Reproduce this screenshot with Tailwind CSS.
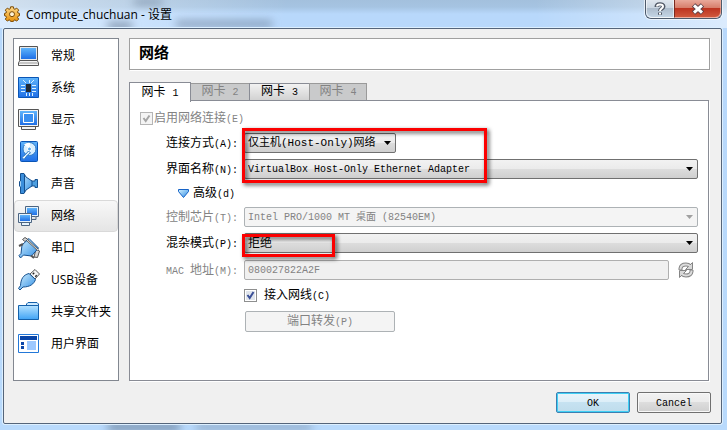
<!DOCTYPE html>
<html lang="zh-CN">
<head>
    <meta charset="UTF-8">
    <meta name="viewport" content="width=device-width, initial-scale=1.0">
    <title>Compute_chuchuan - 设置</title>
    <script src="https://cdn.jsdelivr.net/npm/@tailwindcss/browser@4"></script>
</head>
<body class="font-['Open_Sans','Noto_Sans_CJK_SC',sans-serif] text-xs text-black">
    <!-- Shared gradients for the icons -->
    <svg class="absolute size-0" aria-hidden="true">
        <defs>
            <linearGradient id="screen" x1="0" y1="0" x2="0" y2="1">
                <stop offset="0" stop-color="#5fb4fb"/><stop offset="1" stop-color="#1f6fe6"/>
            </linearGradient>
            <linearGradient id="sky" x1="0" y1="0" x2="1" y2="1">
                <stop offset="0" stop-color="#d3f1ff"/><stop offset="1" stop-color="#2f8de4"/>
            </linearGradient>
            <linearGradient id="folder" x1="0" y1="0" x2="0" y2="1">
                <stop offset="0" stop-color="#b5e2ff"/><stop offset="1" stop-color="#3fa3f5"/>
            </linearGradient>
            <linearGradient id="gold" x1="0" y1="0" x2="0" y2="1">
                <stop offset="0" stop-color="#ffd98a"/><stop offset="1" stop-color="#e8920c"/>
            </linearGradient>
        </defs>
    </svg>

    <div class="relative flex min-h-screen flex-col overflow-hidden bg-[linear-gradient(to_bottom,#a3c0dd_0,#a6c4e2_7px,#b8d8fb_14px,#b9dafc_100%)] pr-[5px] pb-[6px] pl-[3px]">
        <!-- Glass reflections on the frame -->
        <div class="absolute top-0 left-0 h-7 w-72 bg-linear-to-r from-white/50 to-transparent"></div>
        <div class="absolute top-0 right-0 h-7 w-48 bg-linear-to-l from-white/50 to-transparent"></div>
        <div class="absolute top-0 left-[134px] h-1 w-7 bg-slate-600/60 blur-xs"></div>
        <div class="absolute top-[22px] left-[108px] h-2 w-6 bg-slate-600/50 blur-xs"></div>
        <div class="absolute top-[20px] left-[176px] h-2 w-24 bg-slate-600/40 blur-xs"></div>
        <div class="absolute bottom-0 left-[108px] h-1.5 w-18 bg-slate-600/70 blur-xs"></div>
        <div class="absolute bottom-0 left-[196px] h-1.5 w-29 bg-slate-600/40 blur-xs"></div>

        <!-- Title bar -->
        <header class="relative flex h-7 shrink-0 items-start justify-between">
            <div class="flex h-7 items-center gap-1.5 pl-px">
                <svg class="size-4" viewBox="0 0 16 16" aria-hidden="true">
                    <g stroke="#7a4a05" fill="url(#gold)">
                        <path d="M6.6.8h2.8l.4 2 1.1.5 1.8-1.2 2 2-1.2 1.8.5 1.1 1.5.4v2.3l-1.5.5-.5 1.1 1.2 1.8-2 2-1.8-1.2-1.1.5-.4 1H6.6l-.4-1-1.1-.5-1.8 1.2-2-2 1.2-1.8-.5-1.1-1.5-.5V7.4L2 7l.5-1.1L1.3 4.1l2-2 1.8 1.2 1.1-.5z"/>
                        <circle cx="8" cy="8.2" r="2.5" fill="#fff3d8"/>
                    </g>
                </svg>
                <h1 class="pt-px">Compute_chuchuan - 设置</h1>
            </div>
            <div class="flex h-[19px] rounded-b-md border border-t-0 border-[#4d5a6b] shadow-[0_0_0_1px_rgb(255_255_255/0.6)]">
                <button type="button" aria-label="帮助" class="flex w-7 items-center justify-center rounded-bl-md border border-t-0 border-white/60 bg-[linear-gradient(#dfe6ee_0%,#c9d5e1_48%,#adbccc_50%,#c3d4e4_100%)]">
                    <svg class="h-3.5 w-3" viewBox="0 0 12 14" fill="none" aria-hidden="true">
                        <path d="M2.5 5C2.500 1.500 9.500 1.500 9.500 4.500 9.500 6.500 6 6.500 6 9M6 10.500v2.300" stroke="#505866" stroke-width="4"/>
                        <path d="M3 4.500C3 1.800 9 1.800 9 4.500 9 6.500 6 6.500 6 9M6 10.800v1.700" stroke="#fff" stroke-width="2"/>
                    </svg>
                </button>
                <button type="button" aria-label="关闭" class="flex w-[47px] items-center justify-center rounded-br-md border border-t-0 border-l-[#7a2a20] border-[#f0b0a0]/70 bg-[linear-gradient(#e9a99b_0%,#d67b68_48%,#bd3420_50%,#d0583c_100%)]">
                    <svg class="h-3 w-3.5" viewBox="0 0 14 12" fill="none" aria-hidden="true">
                        <path d="M2.500 2l9 8M11.500 2l-9 8" stroke="#5b4048" stroke-width="5"/>
                        <path d="M3 2.400l8 7.200M11 2.400l-8 7.200" stroke="#fff" stroke-width="3"/>
                    </svg>
                </button>
            </div>
        </header>

        <!-- Window body -->
        <div class="relative flex grow flex-col rounded-xs border border-[#55657a] bg-[#f0f0f0] px-[9px] pt-[9px] pb-[10px] shadow-[0_0_0_1px_#dcefff]">
            <div class="flex grow gap-[10px]">
                <!-- Categories -->
                <nav class="w-[106px] shrink-0 border border-[#828790] bg-white pt-px">
                    <ul>
                        <li><a href="#" class="flex h-8 items-center gap-[11px] pl-1">
                            <svg class="size-[22px]" viewBox="0 0 22 22" aria-hidden="true">
                                <path d="M1.500 1.500h18v14h-18z" fill="#e9e9e9" stroke="#555"/>
                                <path d="M3 3h15v11H3z" fill="url(#screen)"/>
                                <path d="M2 15.500h17l1.500 2v3H.5v-3z" fill="#f4f4f4" stroke="#555"/>
                                <path d="M1 18h19" stroke="#999"/>
                            </svg>常规</a></li>
                        <li><a href="#" class="flex h-8 items-center gap-[11px] pl-1">
                            <svg class="size-[22px]" viewBox="0 0 22 22" aria-hidden="true">
                                <path d="M.5.5h20v20H.5z" fill="url(#screen)" stroke="#0a55b5"/>
                                <path d="M8 7h5v8H8z" fill="#222b35"/>
                                <path d="M3 8.500h4M3 11.500h4M3 14.500h4M14 8.500h4M14 11.500h4M14 14.500h4M8.500 16v3M11.500 16v3M14.500 16v3M8 6L5 3M11.500 6V3M13 6l3-3" stroke="#d9f1ff" fill="none"/>
                            </svg>系统</a></li>
                        <li><a href="#" class="flex h-8 items-center gap-[11px] pl-1">
                            <svg class="size-[22px]" viewBox="0 0 22 22" aria-hidden="true">
                                <path d="M.5.5h20v17H.5z" fill="#f4f4f4" stroke="#555"/>
                                <path d="M2 2h17v14H2z" fill="url(#screen)"/>
                                <path d="M5.500 4.500h10v9h-10z" fill="#398ff0" stroke="#fff"/>
                                <path d="M3.500 18v2.500h14V18" fill="#f4f4f4" stroke="#555"/>
                            </svg>显示</a></li>
                        <li><a href="#" class="flex h-8 items-center gap-[11px] pl-1">
                            <svg class="size-[22px]" viewBox="0 0 22 22" aria-hidden="true">
                                <rect x="2.500" y=".5" width="17" height="20" rx="1" fill="url(#screen)" stroke="#0a55b5"/>
                                <circle cx="11.500" cy="8" r="6.500" fill="#d8efff" stroke="#2d78c4"/>
                                <path d="M11.500 8L6 3.500A7 7 0 0 1 12 2z" fill="#fff"/>
                                <circle cx="11.500" cy="8" r="2" fill="#5aa9ec" stroke="#fff"/>
                                <path d="M10.500 10l2 2-3 2-3.500 4.500-2-2 3.500-3z" fill="#eaf6ff" stroke="#2d78c4"/>
                            </svg>存储</a></li>
                        <li><a href="#" class="flex h-8 items-center gap-[11px] pl-1">
                            <svg class="size-[22px]" viewBox="0 0 22 22" aria-hidden="true">
                                <path d="M12 8h5V6.500h2.500v8H17V13h-5z" fill="#4d9fe0" stroke="#15508f"/>
                                <path d="M2.500.5H6L8 4l6 4v5l-6 4-2 3.500H2.500V14l-1-1V8.500l1-.5z" fill="url(#sky)" stroke="#15508f"/>
                                <path d="M6.500 1v19" stroke="#15508f"/>
                                <path d="M3 1h3v19H3z" fill="#3b8edb"/>
                            </svg>声音</a></li>
                        <li><a href="#" aria-current="page" class="flex h-8 items-center gap-[11px] rounded-sm border border-[#d9d9d9] bg-linear-to-b from-[#f8f8f8] to-[#e5e5e5] pl-[3px]">
                            <svg class="size-[22px]" viewBox="0 0 22 22" aria-hidden="true">
                                <path d="M7.500 1.500h13v10h-13z" fill="#e6f2fb" stroke="#4c6582"/>
                                <path d="M9 3h10v7H9z" fill="url(#screen)"/>
                                <path d="M12 14.500h6v-3" fill="#ddd" stroke="#4c6582"/>
                                <path d="M.5 8.500h13v9H.5z" fill="#e6f2fb" stroke="#4c6582"/>
                                <path d="M2 10h10v6H2z" fill="url(#screen)"/>
                                <path d="M3.500 18v2.500h8V18" fill="#e6f2fb" stroke="#4c6582"/>
                            </svg>网络</a></li>
                        <li><a href="#" class="flex h-8 items-center gap-[11px] pl-1">
                            <svg class="size-[22px]" viewBox="0 0 22 22" aria-hidden="true">
                                <path d="M4.500 2.500L7 .5l3 2-3 2zM18 12l3.500 2-2 6.500-3.500-.5z" fill="#d5d5d5" stroke="#555"/>
                                <path d="M4 8l7-6.500 9.500 9.500-7 8-8-1-3 3L1 18.500l2-2z" fill="url(#sky)" stroke="#15508f"/>
                                <path d="M9 3l11 10M1 9l4-2M13 18.500l3 2.500" stroke="#555" stroke-width="2"/>
                                <path d="M9 3l11 10" stroke="#ddd"/>
                            </svg>串口</a></li>
                        <li><a href="#" class="flex h-8 items-center gap-[11px] pl-1">
                            <svg class="size-[22px]" viewBox="0 0 22 22" aria-hidden="true">
                                <path d="M12 5l5-4.500L21.500 5 17 10z" fill="#f4f4f4" stroke="#555"/>
                                <path d="M15 4l1 1M17.500 6.500l1 1" stroke="#222" stroke-width="2"/>
                                <path d="M11 4.500l6.500 6C16 15 12 18 5 18l-3 3-1.500-1.500 2-3C3 10 5 6 11 4.500z" fill="url(#sky)" stroke="#15508f"/>
                            </svg>USB设备</a></li>
                        <li><a href="#" class="flex h-8 items-center gap-[11px] pl-1">
                            <svg class="size-[22px]" viewBox="0 0 22 22" aria-hidden="true">
                                <path d="M8.500 4.500V3L10 1.500h9l1.500 1.500V6" fill="#cdeaff" stroke="#1461ab"/>
                                <path d="M.5 4.500h20v14H.5z" fill="url(#folder)" stroke="#1461ab"/>
                            </svg>共享文件夹</a></li>
                        <li><a href="#" class="flex h-8 items-center gap-[11px] pl-1">
                            <svg class="size-[22px]" viewBox="0 0 22 22" aria-hidden="true">
                                <path d="M.5 1.500h20v18H.5z" fill="#fff" stroke="#2378d8"/>
                                <path d="M2 3h17v4H2z" fill="#0b46a8"/>
                                <path d="M3 9h3v3H3zM3 13h3v3H3z" fill="#0b46a8"/>
                                <path d="M9 8h9v9H9z" fill="#9cc8ff"/>
                            </svg>用户界面</a></li>
                    </ul>
                </nav>

                <!-- Page -->
                <main class="flex min-w-0 grow flex-col pr-[2px] font-['Liberation_Mono','Noto_Sans_CJK_SC',monospace]">
                    <h2 class="flex h-8 shrink-0 items-center border border-[#a0a0a0] bg-white pt-0.5 pl-[9px] text-[15px] font-bold shadow-[1px_1px_0_#fff]">网络</h2>

                    <div role="tablist" class="mt-[11px] flex h-5 shrink-0 items-end">
                        <button type="button" role="tab" aria-selected="true" class="z-10 -mb-px h-5 w-[62px] border border-b-0 border-[#898c95] bg-white">网卡 <span class="text-[10px]">1</span></button>
                        <button type="button" role="tab" disabled class="-ml-px h-[18px] w-[60px] border border-[#9a9a9a] bg-[#c9cacb] text-[#838383]">网卡 <span class="text-[10px]">2</span></button>
                        <button type="button" role="tab" class="-ml-px h-[18px] w-[61px] border border-[#898c95] bg-linear-to-b from-[#f2f2f2] to-[#d2d2d2]">网卡 <span class="text-[10px]">3</span></button>
                        <button type="button" role="tab" disabled class="-ml-px h-[18px] w-[58px] border border-[#9a9a9a] bg-[#c9cacb] text-[#838383]">网卡 <span class="text-[10px]">4</span></button>
                    </div>

                    <form class="relative -mt-px mr-px grow border border-[#898c95] bg-white pt-[5px] pr-[10px] pb-11 shadow-[1px_1px_0_#fff]">
                        <div class="grid grid-cols-[108px_minmax(0,1fr)] grid-rows-[24px_26px_26px_22px_26px_26px_28px_22px_30px] items-center gap-x-1.5">
                            <div class="col-span-2 flex items-center gap-px pl-[10px] text-[#838383]">
                                <span class="relative flex">
                                    <input id="enable" type="checkbox" checked disabled class="size-[13px] appearance-none border border-[#b5b5b5] bg-[#f4f4f4]">
                                    <svg class="absolute inset-0 size-[13px]" viewBox="0 0 13 13" fill="none" aria-hidden="true"><path d="M3.500 6l2.200 3L9.500 3.500" stroke="#a5a5a5" stroke-width="2"/></svg>
                                </span>
                                <label for="enable" class="pt-0.5">启用网络连接<span class="text-[10px]">(E)</span></label>
                            </div>

                            <label for="attached" class="pt-0.5 text-right">连接方式<span class="text-[10px]">(A):</span></label>
                            <div class="relative flex w-[152px]">
                                <select id="attached" class="h-5 w-full appearance-none rounded-xs border border-[#707070] bg-[linear-gradient(#f2f2f2_0%,#ebebeb_48%,#dddddd_50%,#cfcfcf_100%)] pt-px pl-[3px] text-[11px]">
                                    <option>仅主机(Host-Only)网络</option>
                                </select>
                                <svg class="pointer-events-none absolute top-2 right-[5px] h-1 w-[7px]" viewBox="0 0 7 4" aria-hidden="true"><path d="M0 0h7L3.500 4z"/></svg>
                            </div>

                            <label for="adapter" class="pt-0.5 text-right">界面名称<span class="text-[10px]">(N):</span></label>
                            <div class="relative flex">
                                <select id="adapter" class="h-5 w-full appearance-none rounded-xs border border-[#707070] bg-[linear-gradient(#f2f2f2_0%,#ebebeb_48%,#dddddd_50%,#cfcfcf_100%)] pt-px pl-[3px] text-[10px]">
                                    <option>VirtualBox Host-Only Ethernet Adapter</option>
                                </select>
                                <svg class="pointer-events-none absolute top-2 right-[5px] h-1 w-[7px]" viewBox="0 0 7 4" aria-hidden="true"><path d="M0 0h7L3.500 4z"/></svg>
                            </div>

                            <button type="button" aria-expanded="true" class="col-span-2 flex items-center gap-1 justify-self-start pl-12">
                                <svg class="size-[11px]" viewBox="0 0 11 11" aria-hidden="true"><path d="M.5 1.500h10v2L5.500 9.500l-5-6z" fill="url(#sky)" stroke="#1763c6"/></svg>
                                <span class="pt-0.5">高级<span class="text-[10px]">(d)</span></span>
                            </button>

                            <label for="chip" class="pt-0.5 text-right text-[#838383]">控制芯片<span class="text-[10px]">(T):</span></label>
                            <div class="relative flex">
                                <select id="chip" disabled class="h-5 w-full appearance-none rounded-xs border border-[#adb2b5] bg-[#f4f4f4] pt-px pl-[3px] text-[10px] text-[#838383] opacity-100">
                                    <option>Intel PRO/1000 MT 桌面 (82540EM)</option>
                                </select>
                                <svg class="pointer-events-none absolute top-2 right-[5px] h-1 w-[7px]" viewBox="0 0 7 4" aria-hidden="true"><path d="M0 0h7L3.500 4z" fill="#a0a0a0"/></svg>
                            </div>

                            <label for="promisc" class="pt-0.5 text-right">混杂模式<span class="text-[10px]">(P):</span></label>
                            <div class="relative flex">
                                <select id="promisc" class="h-5 w-full appearance-none rounded-xs border border-[#707070] bg-[linear-gradient(#f2f2f2_0%,#ebebeb_48%,#dddddd_50%,#cfcfcf_100%)] pt-px pl-[3px] text-xs">
                                    <option>拒绝</option>
                                </select>
                                <svg class="pointer-events-none absolute top-2 right-[5px] h-1 w-[7px]" viewBox="0 0 7 4" aria-hidden="true"><path d="M0 0h7L3.500 4z"/></svg>
                            </div>

                            <label for="mac" class="pt-0.5 text-right text-[#838383]"><span class="text-[10px]">MAC </span>地址<span class="text-[10px]">(M):</span></label>
                            <div class="flex items-center gap-[9px] pr-1">
                                <input id="mac" type="text" value="080027822A2F" disabled class="h-5 min-w-0 grow rounded-xs border border-[#afafaf] bg-[#f0f0f0] pt-px pl-[3px] text-[10px] text-[#838383]">
                                <button type="button" disabled aria-label="刷新">
                                    <svg class="size-4" viewBox="0 0 16 16" fill="none" aria-hidden="true">
                                        <path d="M2.500 8V6.500Q3 2.500 8 2.500q2.500 0 4 1.500M13.500 8v1.500q-.5 4-5.500 4-2.500 0-4-1.500" stroke="#858585" stroke-width="4"/>
                                        <path d="M14.500.5v7h-7zM1.500 15.500v-7h7z" fill="#d8d8d8" stroke="#858585"/>
                                        <path d="M2.500 7.500v-1Q3 2.500 8 2.500q2.500 0 4 1.500M13.500 8.500v1q-.5 4-5.500 4-2.500 0-4-1.500" stroke="#dcdcdc" stroke-width="2"/>
                                    </svg>
                                </button>
                            </div>

                            <div class="col-start-2 flex items-center gap-[7px]">
                                <span class="relative flex">
                                    <input id="cable" type="checkbox" checked class="size-[13px] appearance-none border border-[#8e8f8f] bg-[#e0e5ec] shadow-[inset_0_0_0_1px_#fff]">
                                    <svg class="pointer-events-none absolute inset-0 size-[13px]" viewBox="0 0 13 13" fill="none" aria-hidden="true"><path d="M3.500 6l2.200 3L9.500 3" stroke="#3a4f97" stroke-width="2"/></svg>
                                </span>
                                <label for="cable" class="pt-0.5">接入网线<span class="text-[10px]">(C)</span></label>
                            </div>

                            <button type="button" disabled class="col-start-2 ml-px h-[21px] w-[150px] rounded-xs border border-[#adb2b5] bg-[#f4f4f4] pt-px text-[#838383]">端口转发<span class="text-[10px]">(P)</span></button>
                        </div>

                        <!-- Highlight marks -->
                        <div class="pointer-events-none absolute top-[27px] left-[112px] h-[55px] w-[245px] border-3 border-[#fb0000] drop-shadow-[2px_2px_2px_rgb(0_0_0/0.7)]"></div>
                        <div class="pointer-events-none absolute top-[133px] left-[112px] h-[23px] w-[93px] border-3 border-[#fb0000] drop-shadow-[2px_2px_2px_rgb(0_0_0/0.7)]"></div>
                    </form>
                </main>
            </div>

            <!-- Dialog buttons -->
            <footer class="mt-[11px] flex shrink-0 justify-end gap-[7px] pr-px font-['Liberation_Mono',monospace] text-[10px]">
                <button type="button" class="h-[21px] w-[74px] rounded-xs border border-[#3c7fb1] bg-[linear-gradient(#eaf4fa_0%,#dceef8_48%,#c6e2f1_50%,#bfdcec_100%)] pt-0.5 shadow-[inset_0_0_0_1px_#3fd0f5]">OK</button>
                <button type="button" class="h-[21px] w-[74px] rounded-xs border border-[#707070] bg-[linear-gradient(#f2f2f2_0%,#ebebeb_48%,#dddddd_50%,#cfcfcf_100%)] pt-0.5 shadow-[inset_0_0_0_1px_#f8f8f8]">Cancel</button>
            </footer>
        </div>
    </div>
</body>
</html>
